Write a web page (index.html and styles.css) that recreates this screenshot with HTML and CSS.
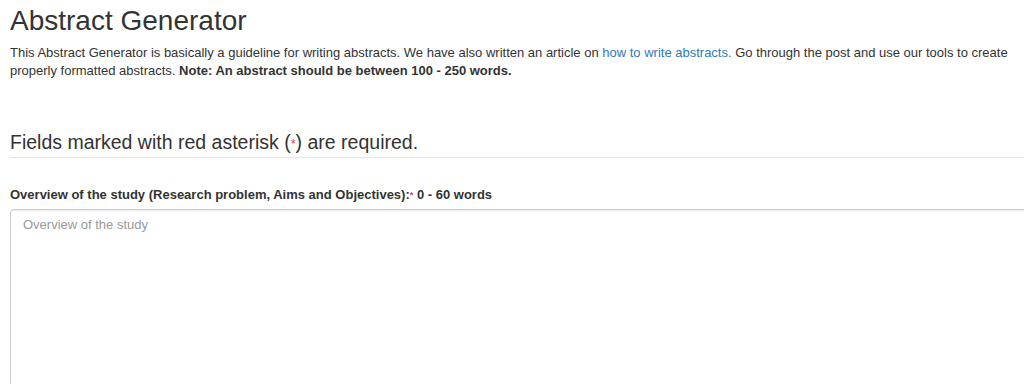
FILE: index.html
```html
<!DOCTYPE html>
<html lang="en">
<head>
  <meta charset="UTF-8">
  <meta name="viewport" content="width=device-width, initial-scale=1.0">
  <title>Abstract Generator</title>
  <link rel="stylesheet" href="styles.css">
</head>
<body>
  <div id="main-container">
    <h1>Abstract Generator</h1>
    <p class="intro">This Abstract Generator is basically a guideline for writing abstracts. We have also written an article on <a href="#">how to write abstracts.</a> Go through the post and use our tools to create properly formatted abstracts. <b>Note: An abstract should be between 100 - 250 words.</b></p>

    <form id="abstract-form">
      <div class="legend">Fields marked with red asterisk (<span class="req">*</span>) are required.</div>

      <div class="form-group">
        <label for="overview">Overview of the study (Research problem, Aims and Objectives):<span class="req">*</span> 0 - 60 words</label>
        <textarea id="overview" placeholder="Overview of the study"></textarea>
      </div>
    </form>
  </div>
</body>
</html>
```

FILE: styles.css
```css
/* Bootstrap-like look for the generator form */
html, body {
  overflow: hidden;
}
body {
  font-family: "Liberation Sans", Arial, sans-serif;
  font-size: 13px;
  line-height: 1.42857;
  color: #333333;
  background-color: #ffffff;
  margin: 0;
}
#main-container {
  padding-left: 10px;
}
h1 {
  font-size: 28px;
  font-weight: normal;
  line-height: 1.1;
  margin: 6px 0 7px;
}
.intro {
  margin: 0;
  padding-right: 10px;
}
.intro a {
  color: #337ab7;
  text-decoration: none;
}
.legend {
  padding: 0;
  margin: 48px 0 29px;
  font-size: 19.5px;
  line-height: 1.42857;
  border-bottom: 1px solid #e5e5e5;
}
.req {
  color: #f0306a;
  font-size: 0.7em;
  vertical-align: 0.15em;
}
.legend .req {
  font-size: 0.65em;
  vertical-align: 0.1em;
}
.form-group label {
  display: block;
  font-size: 13px;
  font-weight: bold;
  line-height: 1.3;
  margin-bottom: 5px;
}
textarea {
  display: block;
  width: 1040px;
  height: 190px;
  box-sizing: border-box;
  padding: 6px 12px;
  font-family: inherit;
  font-size: 13px;
  line-height: 1.42857;
  color: #555555;
  border: 1px solid #cccccc;
  border-radius: 4px;
  box-shadow: inset 0 1px 1px rgba(0, 0, 0, 0.075);
  resize: vertical;
}
textarea::placeholder {
  color: #999999;
}
```
